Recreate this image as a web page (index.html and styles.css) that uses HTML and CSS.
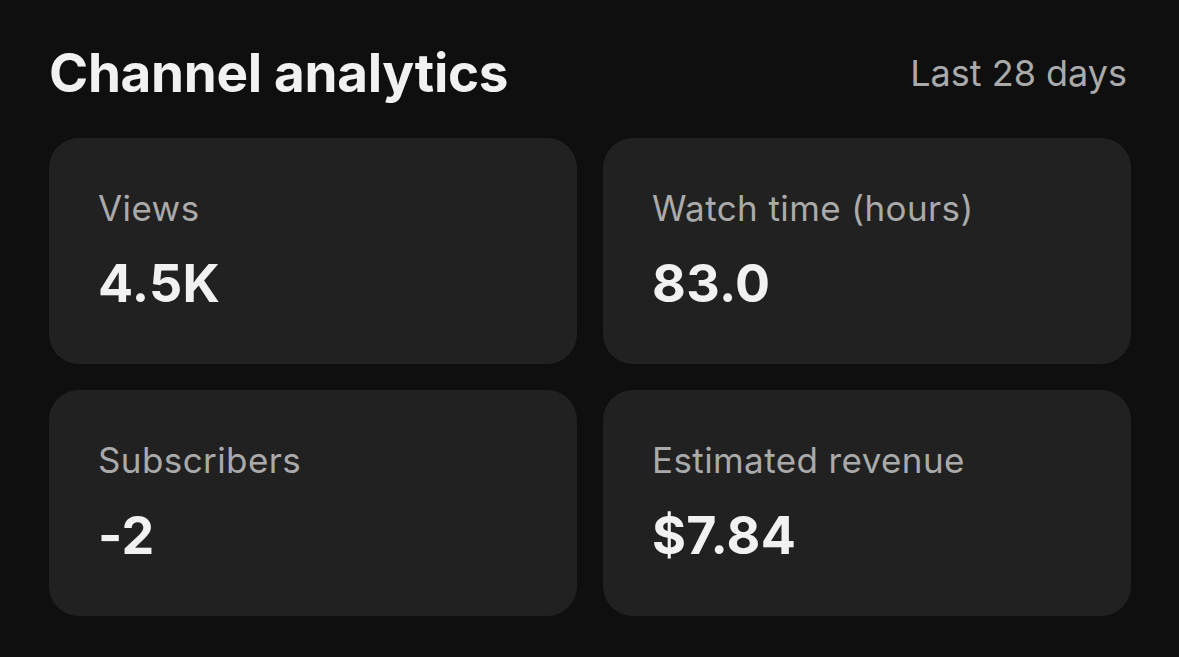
FILE: index.html
```html
<!DOCTYPE html>
<html lang="en">
<head>
<meta charset="utf-8">
<title>Channel analytics</title>
<link rel="stylesheet" href="styles.css">
</head>
<body>
<main class="panel">
  <header class="panel-head">
    <h1 class="panel-title">Channel analytics</h1>
    <span class="panel-range">Last 28 days</span>
  </header>
  <section class="stats">
    <div class="stat-card">
      <div class="stat-label">Views</div>
      <div class="stat-value">4.5K</div>
    </div>
    <div class="stat-card">
      <div class="stat-label">Watch time (hours)</div>
      <div class="stat-value">83.0</div>
    </div>
    <div class="stat-card">
      <div class="stat-label">Subscribers</div>
      <div class="stat-value">-2</div>
    </div>
    <div class="stat-card">
      <div class="stat-label">Estimated revenue</div>
      <div class="stat-value">$7.84</div>
    </div>
  </section>
</main>
</body>
</html>
```
FILE: styles.css
```css
* { box-sizing: border-box; }
html, body {
  margin: 0;
  height: 100%;
  background: #0f0f0f;
}
body {
  font-family: Inter, "Noto Sans", "Liberation Sans", sans-serif;
  color: #f1f1f1;
}
.panel {
  padding: 39px 48px 0 49px;
}
.panel-head {
  display: flex;
  justify-content: space-between;
  align-items: center;
  height: 68px;
  margin-bottom: 31px;
  padding-right: 4px;
}
.panel-title {
  margin: 0;
  font-size: 53px;
  font-weight: 700;
  letter-spacing: -0.3px;
  line-height: 68px;
}
.panel-range {
  font-size: 36px;
  line-height: 44px;
  color: #aaaaaa;
}
.stats {
  display: grid;
  grid-template-columns: 1fr 1fr;
  gap: 26px;
}
.stat-card {
  background: #212121;
  border-radius: 30px;
  height: 226px;
  padding: 48px 49px 0 49px;
}
.stat-label {
  font-size: 35px;
  letter-spacing: 0.4px;
  color: #aaaaaa;
  line-height: 44px;
}
.stat-value {
  margin-top: 24px;
  font-size: 52px;
  font-weight: 700;
  letter-spacing: 0.3px;
  line-height: 60px;
}
```
